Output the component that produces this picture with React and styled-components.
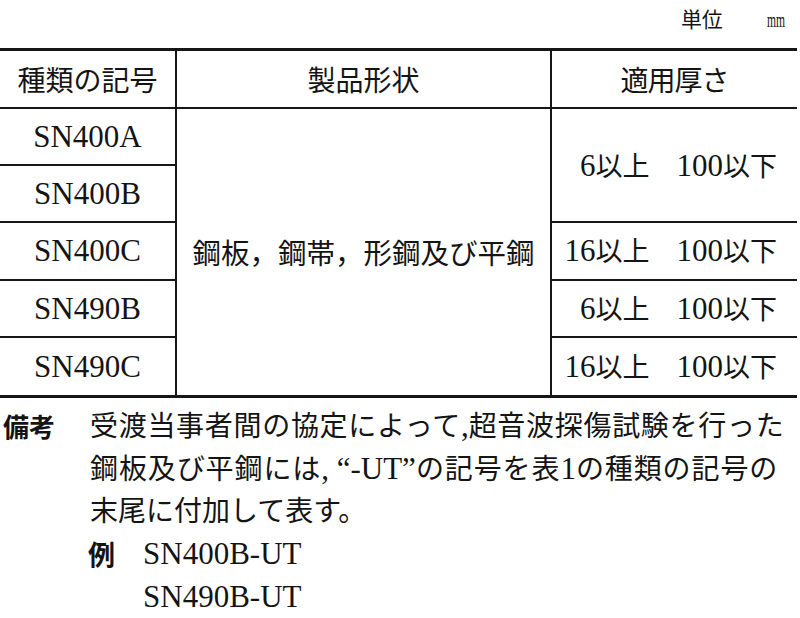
import React from "react";
import styled, { createGlobalStyle } from "styled-components";

const Global = createGlobalStyle`
  html, body { margin: 0; padding: 0; background: #ffffff; }
  body {
    font-family: "Liberation Serif", "Noto Sans CJK JP", serif;
    color: #141414;
  }
  * { box-sizing: border-box; }
`;

const Page = styled.div`
  width: 800px;
  height: 618px;
  overflow: hidden;
  background: #ffffff;
`;

const UnitBar = styled.div`
  height: 48px;
  display: flex;
  justify-content: flex-end;
  align-items: baseline;
  padding: 3px 15px 0 0;
`;

const UnitLabel = styled.span`
  font-family: "Noto Sans CJK JP", sans-serif;
  font-size: 21px;
  line-height: 30px;
  margin-right: 31px;
`;

const UnitMark = styled.span`
  display: inline-block;
  font-family: "Liberation Serif", serif;
  font-size: 20px;
  line-height: 30px;
  transform: scaleX(0.58);
  transform-origin: right center;
`;

const Table = styled.div`
  width: 797px;
  display: grid;
  grid-template-columns: 177px 375px 1fr;
  grid-template-rows: 58px repeat(5, 57.2px);
  border-top: 3px solid #161616;
  border-bottom: 3px solid #161616;
`;

const Cell = styled.div`
  grid-column: ${(p) => p.$col};
  grid-row: ${(p) => p.$row};
  display: flex;
  align-items: center;
  justify-content: center;
  border-right: ${(p) => (p.$endCol ? "none" : "2px solid #161616")};
  border-bottom: ${(p) => (p.$endRow ? "none" : "2px solid #161616")};
`;

const HeadText = styled.span`
  font-family: "Noto Sans CJK JP", sans-serif;
  font-size: 28px;
  line-height: 1;
  letter-spacing: ${(p) => p.$spacing || "0"};
`;

const Code = styled.span`
  font-family: "Liberation Serif", serif;
  font-size: 31px;
  line-height: 1;
`;

const Shape = styled.span`
  font-family: "Noto Sans CJK JP", sans-serif;
  font-size: 28.5px;
  line-height: 1;
`;

const Range = styled.div`
  width: 100%;
  display: flex;
  justify-content: flex-end;
  align-items: baseline;
  padding-right: 20px;
  font-family: "Noto Sans CJK JP", sans-serif;
  font-size: 27px;
  line-height: 1;
`;

const Lo = styled.span`
  min-width: 90px;
  text-align: right;
`;

const Hi = styled.span`
  margin-left: 27px;
`;

const Num = styled.span`
  font-family: "Liberation Serif", serif;
  font-size: 31px;
`;

const Notes = styled.div`
  margin-top: 7px;
  display: grid;
  grid-template-columns: 90px 1fr;
`;

const NoteLabel = styled.div`
  font-family: "Noto Sans CJK JP", sans-serif;
  font-weight: 700;
  font-size: 26px;
  line-height: 42px;
  padding-left: 3px;
`;

const NoteBody = styled.div`
  display: flex;
  flex-direction: column;
`;

const Line = styled.div`
  font-family: "Liberation Serif", "Noto Sans CJK JP", serif;
  font-size: 28px;
  line-height: 42px;
  white-space: nowrap;
  letter-spacing: ${(p) => p.$spacing || "0"};
`;

const Lat = styled.span`
  font-family: "Liberation Serif", serif;
  font-size: 31px;
  letter-spacing: 0;
`;

const Example = styled.div`
  display: grid;
  grid-template-columns: 55px 1fr;
  margin-left: -2px;
`;

const ExLabel = styled.div`
  font-family: "Noto Sans CJK JP", sans-serif;
  font-weight: 700;
  font-size: 27px;
  line-height: 42px;
`;

const ExValues = styled.div`
  display: flex;
  flex-direction: column;
`;

const codes = ["SN400A", "SN400B", "SN400C", "SN490B", "SN490C"];

const ranges = [
  { row: "2 / span 2", lo: "6", hi: "100" },
  { row: "4", lo: "16", hi: "100" },
  { row: "5", lo: "6", hi: "100" },
  { row: "6", lo: "16", hi: "100", end: true },
];

export default function App() {
  return (
    <Page>
      <Global />
      <UnitBar>
        <UnitLabel>単位</UnitLabel>
        <UnitMark>mm</UnitMark>
      </UnitBar>

      <Table>
        <Cell $col="1" $row="1">
          <HeadText>種類の記号</HeadText>
        </Cell>
        <Cell $col="2" $row="1">
          <HeadText>製品形状</HeadText>
        </Cell>
        <Cell $col="3" $row="1" $endCol>
          <HeadText $spacing="-1px">適用厚さ</HeadText>
        </Cell>

        {codes.map((c, i) => (
          <Cell key={c} $col="1" $row={String(i + 2)} $endRow={i === codes.length - 1}>
            <Code>{c}</Code>
          </Cell>
        ))}

        <Cell $col="2" $row="2 / span 5" $endRow>
          <Shape>鋼板，鋼帯，形鋼及び平鋼</Shape>
        </Cell>

        {ranges.map((r) => (
          <Cell key={r.row} $col="3" $row={r.row} $endCol $endRow={r.end}>
            <Range>
              <Lo>
                <Num>{r.lo}</Num>以上
              </Lo>
              <Hi>
                <Num>{r.hi}</Num>以下
              </Hi>
            </Range>
          </Cell>
        ))}
      </Table>

      <Notes>
        <NoteLabel>備考</NoteLabel>
        <NoteBody>
          <Line $spacing="0.7px">
            受渡当事者間の協定によって<Lat>,</Lat>超音波探傷試験を行った
          </Line>
          <Line $spacing="0.9px">
            鋼板及び平鋼には<Lat>, “-UT”</Lat>の記号を表<Lat>1</Lat>の種類の記号の
          </Line>
          <Line>末尾に付加して表す。</Line>
          <Example>
            <ExLabel>例</ExLabel>
            <ExValues>
              <Line>
                <Lat>SN400B-UT</Lat>
              </Line>
              <Line>
                <Lat>SN490B-UT</Lat>
              </Line>
            </ExValues>
          </Example>
        </NoteBody>
      </Notes>
    </Page>
  );
}
